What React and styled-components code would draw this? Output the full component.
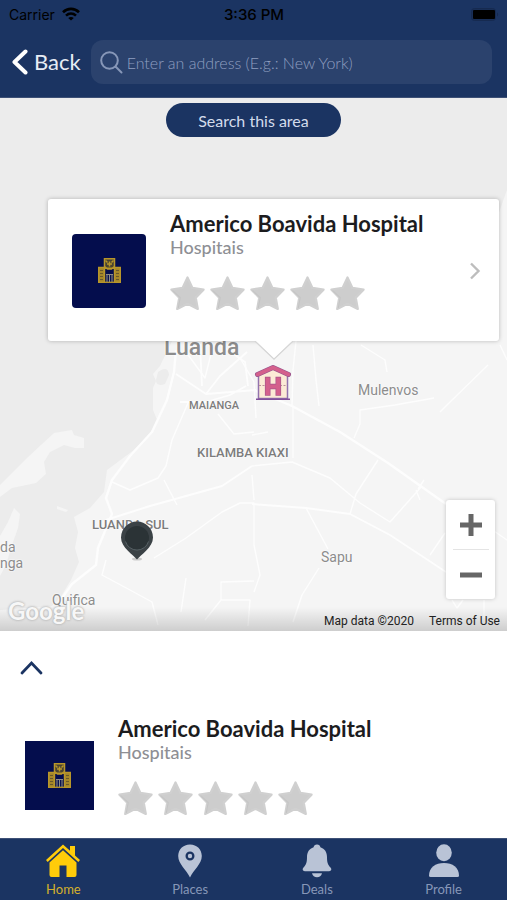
import React from 'react';
import styled, { createGlobalStyle } from 'styled-components';

const GlobalStyle = createGlobalStyle`
  :root {
    --navy: #1b3462;
    --navy-deep: #040d4d;
    --gold: #b8962a;
    --yellow: #ffcc0a;
    --tab: #b9c3d6;
    --gray: #8e8f94;
    --white: #ffffff;
    --black: #1c1c1e;
  }
  * {
    box-sizing: border-box;
  }
  body {
    margin: 0;
    background: var(--white);
    font-family: Lato, "Open Sans", sans-serif;
    color: var(--black);
  }
  button,
  input {
    font-family: inherit;
    border: none;
    padding: 0;
  }
  button {
    background: none;
    cursor: pointer;
  }
  a {
    color: inherit;
    text-decoration: none;
  }
  svg {
    display: block;
    flex-shrink: 0;
  }
`;

const Screen = styled.div`
  display: flex;
  flex-direction: column;
  min-height: 100vh;
`;

const Header = styled.header`
  background: var(--navy);
  border-bottom: 1px solid #3d5076;
  padding-bottom: 13px;
`;

const StatusBar = styled.div`
  display: grid;
  grid-template-columns: 1fr auto 1fr;
  align-items: center;
  height: 28px;
  padding: 0 8px 0 9px;
  font-family: Inter, sans-serif;
  font-size: 14px;
  color: #000000;
  & .carrier {
    display: flex;
    align-items: center;
    gap: 7px;
  }
  & .time {
    font-size: 15px;
    font-weight: 500;
  }
  & .battery {
    justify-self: end;
  }
`;

const NavBar = styled.div`
  display: flex;
  align-items: center;
  gap: 10px;
  padding: 12px 15px 0 12px;
`;

const BackButton = styled.button`
  display: flex;
  align-items: center;
  gap: 6px;
  font-size: 22px;
  font-weight: 400;
  line-height: 28px;
  color: #e6ecf5;
`;

const SearchBox = styled.label`
  display: flex;
  flex: 1;
  align-items: center;
  gap: 4px;
  height: 44px;
  min-width: 0;
  padding: 0 9px;
  border-radius: 12px;
  background: #2b426d;
  & input {
    flex: 1;
    min-width: 0;
    background: none;
    outline: none;
    font-size: 16px;
    color: var(--white);
  }
  & input::placeholder {
    color: #8f9fc0;
    font-weight: 300;
    opacity: 1;
  }
`;

const MapArea = styled.main`
  position: relative;
  display: flex;
  flex: 1;
  flex-direction: column;
  min-height: 480px;
  padding-top: 5px;
  overflow: hidden;
  background: #ececec;
  font-family: Roboto, sans-serif;
`;

const MapCanvas = styled.div`
  position: absolute;
  inset: 0;
  & > svg {
    width: 100%;
    height: 100%;
  }
`;

const PlaceLabel = styled.span`
  position: absolute;
  left: ${({ $x }) => $x}px;
  top: ${({ $y }) => $y}px;
  transform: translateY(-50%);
  font-size: ${({ $size }) => $size || 14}px;
  font-weight: ${({ $bold }) => ($bold ? 500 : 400)};
  line-height: 16px;
  color: ${({ $dark }) => ($dark ? '#7c7c7c' : '#8c8c8c')};
  white-space: pre;
  text-shadow: 0 0 2px #ffffff, 0 0 2px #ffffff;
`;

const Marker = styled.button`
  position: absolute;
  left: ${({ $x }) => $x}px;
  top: ${({ $y }) => $y}px;
`;

const MapFade = styled.div`
  position: absolute;
  inset: auto 0 0;
  height: 24px;
  background: linear-gradient(rgba(0, 0, 0, 0), rgba(0, 0, 0, 0.16));
`;

const MapFooter = styled.div`
  position: absolute;
  inset: auto 7px 2px 8px;
  display: flex;
  align-items: flex-end;
  justify-content: space-between;
  font-size: 12px;
  line-height: 16px;
  color: #222222;
  & .google {
    font-family: Lato, sans-serif;
    font-size: 24px;
    font-weight: 700;
    line-height: 36px;
    color: #f7f7f7;
    text-shadow: 0 0 2px #aaaaaa, 0 0 3px #c0c0c0;
  }
  & .legal {
    display: flex;
    gap: 15px;
  }
`;

const SearchAreaButton = styled.button`
  position: relative;
  align-self: center;
  height: 34px;
  padding: 0 32px;
  border-radius: 17px;
  background: var(--navy);
  && {
    font-family: Lato, sans-serif;
  }
  font-size: 16px;
  color: #d3dcec;
`;

const Callout = styled.a`
  position: relative;
  display: flex;
  align-items: center;
  gap: 24px;
  margin: 62px 8px 0 48px;
  padding: 13px 18px 30px 24px;
  border-radius: 3px;
  background: var(--white);
  box-shadow: 0 0 4px rgba(0, 0, 0, 0.25);
  font-family: Lato, sans-serif;
  & .thumb,
  & .arrow {
    margin-top: 18px;
  }
`;

const CalloutTail = styled.svg`
  position: absolute;
  top: 100%;
  left: 50%;
  transform: translateX(-50%);
`;

const Thumb = styled.div`
  display: flex;
  flex-shrink: 0;
  align-items: center;
  justify-content: center;
  width: ${({ $size }) => $size}px;
  height: ${({ $size }) => $size}px;
  border-radius: ${({ $round }) => ($round ? 4 : 0)}px;
  background: var(--navy-deep);
`;

const Info = styled.div`
  flex: 1;
  min-width: 0;
  & h2 {
    margin: 0;
    font-size: 22px;
    font-weight: 700;
    line-height: 24px;
    white-space: nowrap;
  }
  & p {
    margin: 0;
    font-size: 18px;
    font-weight: 500;
    line-height: 22px;
    color: var(--gray);
  }
`;

const Stars = styled.div`
  display: flex;
  gap: 5px;
  margin-top: 18px;
`;

const ZoomControls = styled.div`
  position: absolute;
  right: 12px;
  bottom: 32px;
  display: flex;
  flex-direction: column;
  align-items: center;
  width: 49px;
  border-radius: 3px;
  background: var(--white);
  box-shadow: 0 0 4px rgba(0, 0, 0, 0.2);
  & button {
    display: flex;
    align-items: center;
    justify-content: center;
    width: 100%;
    height: 49px;
  }
  & hr {
    width: 36px;
    height: 1px;
    margin: 0;
    border: none;
    background: #e4e4e4;
  }
`;

const Sheet = styled.section`
  padding: 29px 20px 22px;
  background: var(--white);
`;

const ToggleButton = styled.button`
  display: block;
`;

const ListItem = styled.a`
  display: flex;
  align-items: center;
  gap: 24px;
  margin-top: 42px;
  padding-left: 5px;
  & .thumb {
    margin-top: 18px;
  }
`;

const TabBar = styled.nav`
  display: grid;
  grid-template-columns: repeat(4, 1fr);
  height: 62px;
  border-top: 1px solid #3d5076;
  background: var(--navy);
`;

const Tab = styled.a`
  display: flex;
  flex-direction: column;
  align-items: center;
  gap: 3px;
  padding-top: 5px;
  font-size: 13px;
  line-height: 16px;
  color: ${({ $active }) => ($active ? '#d4b02c' : '#8797b8')};
`;

function WifiIcon() {
  return (
    <svg width="18" height="14" viewBox="0 0 18 14" fill="none" stroke="#000000" strokeWidth="2.6">
      <path d="M1 5.2C5.6.7 12.4.7 17 5.2" />
      <path d="M4 8.6c3-2.7 7-2.7 10 0" />
      <path d="M9 13.6 6.2 10.9c1.7-1.3 3.9-1.3 5.6 0z" fill="#000000" stroke="none" />
    </svg>
  );
}

function BatteryIcon() {
  return (
    <svg className="battery" width="28" height="13" viewBox="0 0 28 13">
      <rect x=".5" y=".5" width="24" height="12" rx="3" fill="#182e57" stroke="#162a50" />
      <rect x="2" y="2" width="22" height="9" rx="1" fill="#000000" />
      <path d="M26 4.5c1.5.5 1.5 3.5 0 4z" fill="#162a50" />
    </svg>
  );
}

function HospitalLogo() {
  return (
    <svg width="23" height="25" viewBox="0 0 23 25" fill="none" stroke="var(--gold)">
      <path d="M6.5.8h10v9.4h-10z" fill="#4a4330" strokeWidth="1.5" />
      <path d="M7.5 2.5 9.5 4.5M15.5 2.5 13.5 4.5M11.5 3.5v5M9 6h5" strokeWidth="1.5" />
      <path d="M6.5 8.5 9.5 11h4l3-2.5" strokeWidth="1.5" />
      <path d="M.7 9.5h5.8v14.8H.7zM16.5 9.5h5.8v14.8h-5.8z" fill="#a4862a" strokeWidth="1.4" />
      <path d="M2 12.5h3M2 15.5h3M2 18.5h3M2 21.5h3M18 12.5h3M18 15.5h3M18 18.5h3M18 21.5h3" stroke="#5b4d2c" strokeWidth=".8" />
      <path d="M8 16.5h7M9 17v7M11.5 17v7M14 17v7" stroke="#8f8d85" strokeWidth="1.1" />
      <path d="M6 24.3h11" strokeWidth="1.3" />
    </svg>
  );
}

function Star() {
  return (
    <svg width="35" height="35" viewBox="0 0 34 34">
      <path
        d="M17 1.5 21.8 11.6 32.6 13.2 25 21 27 32 17 27 7 32 9 21 1.4 13.2 12.2 11.6z"
        fill="#cdcdcd"
        stroke="#d0d0d0"
        strokeWidth="2.2"
        strokeLinejoin="round"
      />
      <path d="M2.5 14 9.9 21 8 31.2" fill="none" stroke="#c4c4c4" strokeWidth="1" />
    </svg>
  );
}

function Rating() {
  return (
    <Stars role="img" aria-label="0 / 5">
      {[1, 2, 3, 4, 5].map((n) => (
        <Star key={n} />
      ))}
    </Stars>
  );
}

function PlaceInfo({ name, category }) {
  return (
    <Info>
      <h2>{name}</h2>
      <p>{category}</p>
      <Rating />
    </Info>
  );
}

function HospitalMarker() {
  return (
    <svg width="38" height="38" viewBox="0 0 38 38">
      <path d="M4.5 11 19 4l14.5 7v23.5h-29z" fill="#fcebd6" stroke="#9273ae" strokeWidth="1.5" />
      <path d="M2 35.3h34" stroke="#81509a" strokeWidth="1.6" />
      <path d="M5 21.5h28" stroke="#bb9099" strokeWidth="1" strokeDasharray="2 1.5" />
      <path d="M3.5 10.5 19 3.5l15.5 7" fill="none" stroke="#96548c" strokeWidth="5" strokeLinecap="round" strokeLinejoin="round" />
      <path d="M3.5 10.5 19 3.5l15.5 7" fill="none" stroke="#d4608c" strokeWidth="3.6" strokeLinecap="round" strokeLinejoin="round" />
      <path d="M13.7 15.5v13.5M24.3 15.5v13.5M14 22.5h10" fill="none" stroke="#a9558c" strokeWidth="5.6" strokeLinecap="square" />
      <path d="M13.7 15.5v13.5M24.3 15.5v13.5M14 22.5h10" fill="none" stroke="#d4608c" strokeWidth="4.2" strokeLinecap="square" />
    </svg>
  );
}

function PinMarker() {
  return (
    <svg width="34" height="40" viewBox="0 0 34 40">
      <ellipse cx="17" cy="38" rx="5" ry="1.5" fill="#cccccc" />
      <path d="M17 38.5C13.5 34 1 26.5 1 16.5a16 16 0 0 1 32 0c0 10-12.500 17.500-16 22z" fill="#3b4246" />
      <circle cx="17" cy="17" r="12" fill="#2b3336" />
      <path d="M5.5 20.5a12 12 0 0 0 23 0" fill="none" stroke="#566064" strokeWidth="1" />
    </svg>
  );
}

function MapDrawing() {
  return (
    <svg viewBox="0 98 507 533" preserveAspectRatio="xMidYMin slice" aria-hidden="true">
      <g fill="#f5f5f5">
        <path d="M507 190 498 215 490 290 440 325 240 341 172 341 160 366 153 374 156 381 153 388 153 410 157 420 150 434 134 450 107 470 104 492 90 508 74 517 78 532 75 548 79 562 71 580 60 598 52 606 0 610V631H507z" />
        <path d="M54 433 72 430 74 435 84 438V448H75L64 445 50 452 44 462 46 474 36 483 12 488 0 497V485L15 470 28 457 42 444z" />
        <path d="M14 508 20 514 18 528 12 545 6 565 0 576V536L8 522z" />
        <path d="M57 506 68 510 66 512 57 509z" />
      </g>
      <path d="M158 372q10-7 11 3l-4 9q-9 3-9-4z" fill="#ececec" />
      <g fill="none" stroke="#fdfdfd" strokeWidth="1.4" strokeLinejoin="round">
        <path strokeWidth="2.4" d="M176 350 174 372 167 400 152 432 130 456 112 480 106 498 112 514 98 548 96 565 72 584 62 598" />
        <path strokeWidth="1.8" d="M176 374 206 394 256 390M206 394 220 376 247 352M180 402H206L230 395 246 386 M200 344 202 386M222 346 245 362 248 386" />
        <path d="M188 403 172 440 166 466 158 478 130 490 112 482M218 414 234 434 254 432M186 352 205 378 212 350M240 358 254 382 256 418" />
        <path strokeWidth="2.2" d="M292 406 340 432 388 463 446 504M254 390 292 406" />
        <path d="M293 406V458M440 412 448 404 488 365M434 398 395 405 360 410V424L354 438M361 345 385 360 387 372M313 345 316 380 319 406M296 341 293 370 292 406" />
        <path strokeWidth="2" d="M106 520 150 506 222 486 252 466M252 504 306 508 350 514" />
        <path d="M252 466 292 462 330 478 360 503 390 522M350 514 356 494 378 460M390 522 422 486M306 508 328 549M420 500 416 490M154 558 186 538 222 512 240 503H254V545L260 575 254 592" />
        <path strokeWidth="1.8" d="M350 514 390 535 446 572" />
        <path d="M164 480 177 505M106 560 102 575 130 590 152 602 158 625M186 578 181 612M254 581 221 582 221 600 205 620M221 600H250L248 626M319 568 302 595 293 622M478 520 507 540M430 555 445 533M484 600V618M452 600 457 608 463 600" />
        <path d="M252 435 268 432M252 475 254 500M418 489 424 480M500 345 507 360" />
      </g>
    </svg>
  );
}

const LABELS = [
  { text: 'Luanda', x: 164, y: 250, size: 23, bold: true },
  { text: 'MAIANGA', x: 189, y: 308, size: 11, bold: true, dark: true },
  { text: 'Mulenvos', x: 358, y: 292 },
  { text: 'KILAMBA KIAXI', x: 197, y: 355, size: 13, bold: true, dark: true },
  { text: 'LUANDA SUL', x: 92, y: 427, size: 13, bold: true, dark: true },
  { text: 'Sapu', x: 321, y: 459 },
  { text: 'da', x: 0, y: 449 },
  { text: 'nga', x: 0, y: 465 },
  { text: 'Quifica', x: 52, y: 502 },
];

const TABS = [
  {
    name: 'Home',
    active: true,
    icon: (
      <>
        <path d="M17 .5 0 16l1.7 1.9L17 4l15.3 13.9L34 16l-5-4.6V2h-5v4.8z" />
        <path d="M17 6.2 3.5 18.5V31q0 2 2 2h8V21.5h7V33h8q2 0 2-2V18.5z" />
      </>
    ),
  },
  {
    name: 'Places',
    icon: (
      <path
        fillRule="evenodd"
        d="M17 .5C10 .5 5.2 5.500 5.2 12c0 8 8.300 14 11.800 21.500C20.500 26 28.800 20 28.800 12 28.800 5.500 24 .5 17 .5zm0 7a4.500 4.500 0 1 1 0 9 4.500 4.500 0 0 1 0-9zm0 2.300a2.200 2.200 0 1 0 0 4.400 2.200 2.200 0 0 0 0-4.400z"
      />
    ),
  },
  {
    name: 'Deals',
    icon: (
      <>
        <path d="M17 .5c2 0 3.200 1.200 3.400 2.800 4.400 1.400 6.600 5 6.600 9.700 0 5 .6 7.500 3.500 10.500 1.600 1.700.6 3.700-1.300 3.700H4.800c-1.900 0-2.900-2-1.300-3.700C6.400 20.500 7 18 7 13c0-4.700 2.200-8.300 6.600-9.700C13.800 1.700 15 .5 17 .5z" />
        <path d="M12 29.300h10c-.6 2.700-2.500 4-5 4s-4.400-1.300-5-4z" />
      </>
    ),
  },
  {
    name: 'Profile',
    icon: (
      <>
        <ellipse cx="17" cy="8.800" rx="7.800" ry="8.500" />
        <path d="M2 31.500C2 23.500 8.500 19 17 19s15 4.500 15 12.500q0 1.500-1.500 1.500h-27Q2 33 2 31.500z" />
      </>
    ),
  },
];

export default function App() {
  return (
    <>
      <GlobalStyle />
      <Screen>
        <Header>
          <StatusBar>
            <span className="carrier">
              Carrier
              <WifiIcon />
            </span>
            <span className="time">3:36 PM</span>
            <BatteryIcon />
          </StatusBar>
          <NavBar>
            <BackButton type="button">
              <svg width="16" height="26" viewBox="0 0 16 26" fill="none" stroke="#ffffff" strokeWidth="4" strokeLinecap="round" strokeLinejoin="round">
                <path d="M13.5 2.5 2.5 13l11 10.5" />
              </svg>
              Back
            </BackButton>
            <SearchBox>
              <svg width="23" height="23" viewBox="0 0 23 23" fill="none" stroke="#8797b8" strokeWidth="2" strokeLinecap="round">
                <circle cx="9.5" cy="9.5" r="8.3" />
                <path d="m15.5 15.5 6 6" />
              </svg>
              <input type="text" aria-label="Address" placeholder="Enter an address (E.g.: New York)" />
            </SearchBox>
          </NavBar>
        </Header>

        <MapArea>
          <MapCanvas>
            <MapDrawing />
            {LABELS.map(({ text, x, y, size, bold, dark }) => (
              <PlaceLabel key={text} $x={x} $y={y} $size={size} $bold={bold} $dark={dark}>
                {text}
              </PlaceLabel>
            ))}
            <Marker $x={254} $y={266} type="button" aria-label="Americo Boavida Hospital">
              <HospitalMarker />
            </Marker>
            <Marker $x={120} $y={423} type="button" aria-label="Luanda Sul">
              <PinMarker />
            </Marker>
            <MapFade />
          </MapCanvas>
          <SearchAreaButton type="button">Search this area</SearchAreaButton>
          <Callout href="#hospital">
            <Thumb className="thumb" $size={74} $round>
              <HospitalLogo />
            </Thumb>
            <PlaceInfo name="Americo Boavida Hospital" category="Hospitais" />
            <svg className="arrow" width="12" height="18" viewBox="0 0 12 18" fill="none" stroke="#bdbdbd" strokeWidth="2.4">
              <path d="m2 1.5 7.5 7.5L2 16.5" />
            </svg>
            <CalloutTail width="42" height="20" viewBox="0 0 42 20">
              <path d="M2 0 21 18 40 0" fill="#ffffff" stroke="#d6d6d6" strokeWidth="1.5" />
              <path d="M3 0h36L21 17z" fill="#ffffff" />
            </CalloutTail>
          </Callout>
          <ZoomControls>
            <button type="button" aria-label="Zoom in">
              <svg width="22" height="22" viewBox="0 0 22 22" stroke="#666666" strokeWidth="5">
                <path d="M11 0v22M0 11h22" />
              </svg>
            </button>
            <hr />
            <button type="button" aria-label="Zoom out">
              <svg width="22" height="22" viewBox="0 0 22 22" stroke="#666666" strokeWidth="5">
                <path d="M0 11h22" />
              </svg>
            </button>
          </ZoomControls>
          <MapFooter>
            <span className="google">Google</span>
            <span className="legal">
              <span>Map data ©2020</span>
              <a href="#terms">Terms of Use</a>
            </span>
          </MapFooter>
        </MapArea>

        <Sheet>
          <ToggleButton type="button" aria-label="Expand list">
            <svg width="23" height="15" viewBox="0 0 23 15" fill="none" stroke="var(--navy)" strokeWidth="2.8" strokeLinecap="round">
              <path d="M2 13 11.5 3 21 13" />
            </svg>
          </ToggleButton>
          <ListItem href="#hospital">
            <Thumb className="thumb" $size={69}>
              <HospitalLogo />
            </Thumb>
            <PlaceInfo name="Americo Boavida Hospital" category="Hospitais" />
          </ListItem>
        </Sheet>

        <TabBar>
          {TABS.map(({ name, icon, active }) => (
            <Tab key={name} href={`#${name.toLowerCase()}`} $active={active}>
              <svg width="34" height="34" viewBox="0 0 34 34" fill={active ? 'var(--yellow)' : 'var(--tab)'}>
                {icon}
              </svg>
              {name}
            </Tab>
          ))}
        </TabBar>
      </Screen>
    </>
  );
}
